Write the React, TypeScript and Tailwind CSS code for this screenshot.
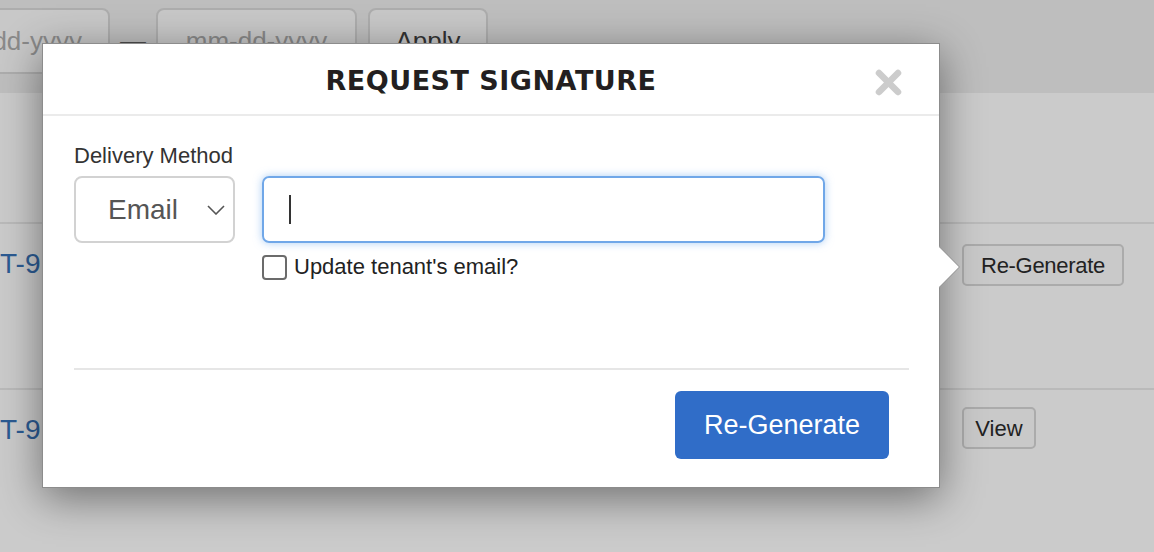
import React from "react";

const sans = "font-['Liberation_Sans','Helvetica',sans-serif]";

const App: React.FC = () => {
  return (
    <div className={`relative w-[1154px] h-[552px] overflow-hidden bg-[#cbcbcb] ${sans}`}>
      {/* page behind the overlay */}
      <div className="flex h-[93px] items-start bg-[#bebebe] pt-[8px]">
        <div className="ml-[-90px] flex h-[66px] w-[200px] items-center justify-end rounded-lg border-2 border-[#adadad] bg-[#c8c8c8] pr-[26px] text-[26px] text-[#8a8a8a]">
          mm-dd-yyyy
        </div>
        <div className="flex h-[66px] w-[46px] items-center justify-center text-[26px] text-[#333]">—</div>
        <div className="flex h-[66px] w-[201px] items-center justify-center rounded-lg border-2 border-[#adadad] bg-[#c8c8c8] text-[26px] text-[#8a8a8a]">
          mm-dd-yyyy
        </div>
        <div className="ml-[11px] flex h-[66px] w-[120px] items-center justify-center rounded-lg border-2 border-[#adadad] bg-[#c8c8c8] text-[26px] text-[#333]">
          Apply
        </div>
      </div>
      <div className="h-[129px]" />
      <div className="h-[2px] bg-[#bababa]" />
      <div className="flex h-[164px] items-start justify-between">
        <span className="mt-[24px] text-[28px] leading-[32px] text-[#2c5b93]">T-9</span>
        <button className="mr-[30px] mt-[20px] h-[42px] w-[162px] rounded-[5px] border-2 border-[#ababab] bg-[#c9c9c9] text-[22px] tracking-[-0.3px] text-[#222]">
          Re-Generate
        </button>
      </div>
      <div className="h-[2px] bg-[#bababa]" />
      <div className="flex items-start justify-between">
        <span className="mt-[24px] text-[28px] leading-[32px] text-[#2c5b93]">T-9</span>
        <button className="mr-[118px] mt-[17px] h-[42px] w-[74px] rounded-[5px] border-2 border-[#ababab] bg-[#c9c9c9] text-[22px] text-[#222]">
          View
        </button>
      </div>

      {/* popover */}
      <div className="absolute left-[42px] top-[43px] flex h-[445px] w-[898px] flex-col border border-[#8c8c8c] bg-white shadow-[0_10px_40px_rgba(0,0,0,0.45)]">
        <div className="relative flex h-[72px] items-center justify-center border-b-2 border-[#ebebeb]">
          <h2 className="mt-[4px] font-['DejaVu_Sans',sans-serif] text-[27px] font-bold tracking-[0.5px] text-[#231f20]">
            REQUEST SIGNATURE
          </h2>
          <svg className="absolute right-[37px] top-[25px]" width="27" height="27" viewBox="0 0 27 27">
            <line x1="4" y1="4" x2="23" y2="23" stroke="#cccccc" strokeWidth="6.5" strokeLinecap="round" />
            <line x1="23" y1="4" x2="4" y2="23" stroke="#cccccc" strokeWidth="6.5" strokeLinecap="round" />
          </svg>
        </div>

        <div className="flex flex-col px-[31px] pt-[27px]">
          <label className="mb-[7px] text-[22px] leading-[26px] text-[#333]">Delivery Method</label>
          <div className="flex gap-[27px]">
            <div className="flex h-[67px] w-[161px] shrink-0 items-center rounded-[8px] border-2 border-[#d2d2d2] pl-[32px] pr-[8px]">
              <span className="flex-1 text-[28px] text-[#555]">Email</span>
              <svg width="18" height="10" viewBox="0 0 18 10">
                <polyline points="1,1 9,9 17,1" fill="none" stroke="#555" strokeWidth="1.6" />
              </svg>
            </div>
            <div className="flex flex-col">
              <div className="flex h-[67px] w-[563px] items-center rounded-[7px] border-2 border-[#70a7e8] px-[25px] shadow-[0_0_9px_rgba(102,164,233,0.55)]">
                <div className="h-[29px] w-[2px] bg-[#333]" />
              </div>
              <label className="mt-[11px] flex items-center gap-[7px]">
                <span className="h-[25px] w-[25px] rounded-[4px] border-2 border-[#6b6b6b] bg-white" />
                <span className="text-[22px] leading-[26px] text-[#222]">Update tenant's email?</span>
              </label>
            </div>
          </div>
          <div className="mr-[-1px] mt-[88px] h-[2px] bg-[#e6e6e6]" />
          <div className="flex justify-end pr-[19px] pt-[21px]">
            <button className="h-[68px] w-[214px] rounded-[6px] bg-[#306dc8] text-[27px] text-white">Re-Generate</button>
          </div>
        </div>
      </div>

      {/* arrow */}
      <svg className="absolute left-[938px] top-[246px]" width="24" height="42" viewBox="0 0 24 42">
        <polygon points="0,0 21,21 0,42" fill="white" />
        <polyline points="1,0 21.5,21 1,42" fill="none" stroke="#9a9a9a" strokeWidth="1" />
      </svg>
    </div>
  );
};

export default App;
